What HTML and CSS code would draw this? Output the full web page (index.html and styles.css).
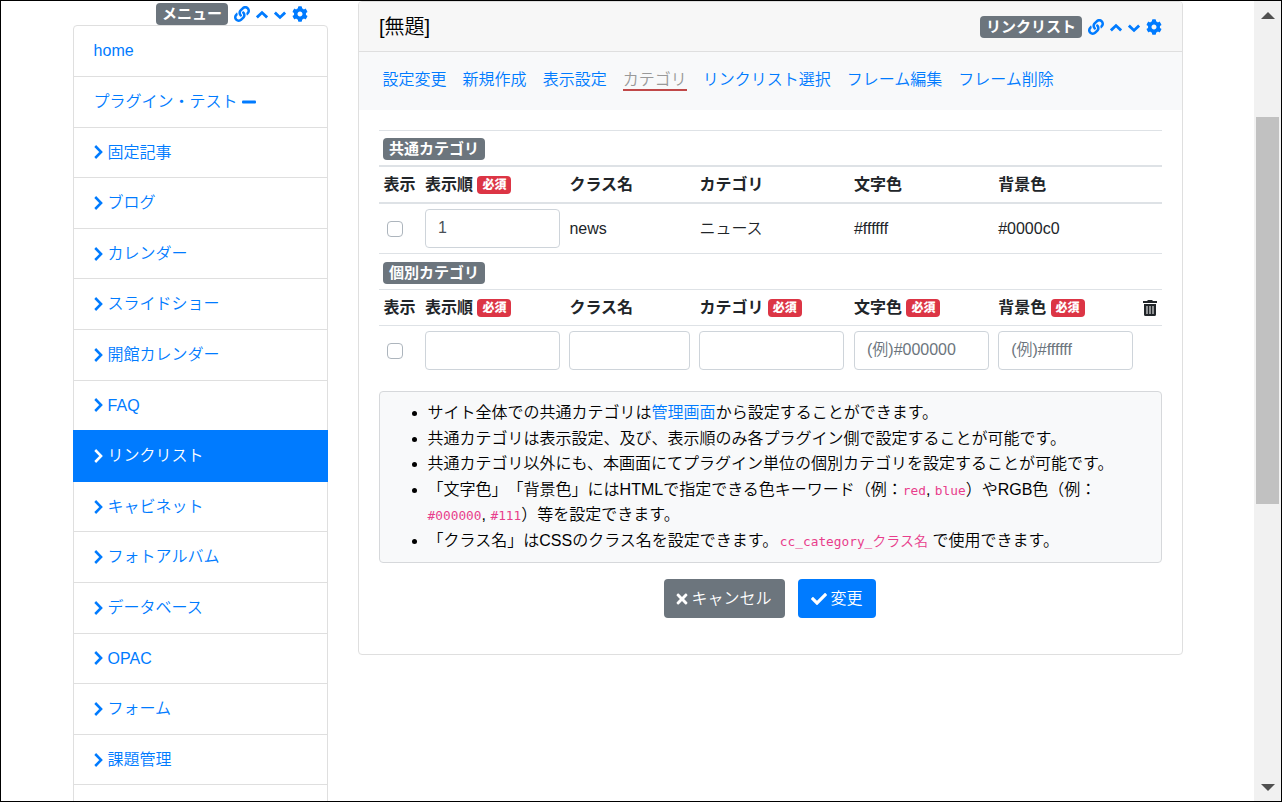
FILE: index.html
```html
<!DOCTYPE html>
<html lang="ja">
<head>
<meta charset="utf-8">
<title>リンクリスト</title>
<link rel="stylesheet" href="styles.css">
</head>
<body>
<svg class="defs">
  <symbol id="link" viewBox="0 0 512 512"><path d="M326.612 185.391c59.747 59.809 58.927 155.698.36 214.59-.11.12-.24.25-.36.37l-67.2 67.2c-59.27 59.27-155.699 59.262-214.96 0-59.27-59.26-59.27-155.7 0-214.96l37.106-37.106c9.84-9.84 26.786-3.3 27.294 10.606.648 17.722 3.826 35.527 9.69 52.721 1.986 5.822.567 12.262-3.783 16.612l-13.087 13.087c-28.026 28.026-28.905 73.66-1.155 101.96 28.024 28.579 74.086 28.749 102.325.51l67.2-67.19c28.191-28.191 28.073-73.757 0-101.83-3.701-3.694-7.429-6.564-10.341-8.569a16.037 16.037 0 0 1-6.947-12.606c-.396-10.567 3.348-21.456 11.698-29.806l21.054-21.055c5.521-5.521 14.182-6.199 20.584-1.731a152.482 152.482 0 0 1 20.522 17.197zM467.547 44.449c-59.261-59.262-155.69-59.27-214.96 0l-67.2 67.2c-.12.12-.25.25-.36.37-58.566 58.892-59.387 154.781.36 214.59a152.454 152.454 0 0 0 20.521 17.196c6.402 4.468 15.064 3.789 20.584-1.731l21.054-21.055c8.35-8.35 12.094-19.239 11.698-29.806a16.037 16.037 0 0 0-6.947-12.606c-2.912-2.005-6.64-4.875-10.341-8.569-28.073-28.073-28.191-73.639 0-101.83l67.2-67.19c28.239-28.239 74.3-28.069 102.325.51 27.75 28.3 26.872 73.934-1.155 101.96l-13.087 13.087c-4.35 4.35-5.769 10.79-3.783 16.612 5.864 17.194 9.042 34.999 9.69 52.721.509 13.906 17.454 20.446 27.294 10.606l37.106-37.106c59.271-59.259 59.271-155.699.001-214.959z"/></symbol>
  <symbol id="up" viewBox="0 0 12 16"><path d="M.9 11.4 6 6.6 11.100 11.400" fill="none" stroke="currentColor" stroke-width="2.8"/></symbol>
  <symbol id="down" viewBox="0 0 12 16"><path d="M.9 6.600 6 11.400 11.100 6.600" fill="none" stroke="currentColor" stroke-width="2.8"/></symbol>
  <symbol id="cog" viewBox="0 0 512 512"><path d="M487.4 315.7l-42.6-24.6c4.3-23.2 4.3-47 0-70.2l42.6-24.6c4.9-2.8 7.1-8.6 5.5-14-11.1-35.6-30-67.8-54.7-94.6-3.8-4.1-10-5.1-14.8-2.3L380.8 110c-17.9-15.4-38.5-27.3-60.8-35.1V25.8c0-5.6-3.9-10.5-9.4-11.7-36.7-8.2-74.3-7.8-109.2 0-5.5 1.2-9.4 6.1-9.4 11.7V75c-22.2 7.9-42.8 19.8-60.8 35.1L88.7 85.5c-4.9-2.8-11-1.9-14.8 2.3-24.7 26.7-43.6 58.9-54.7 94.6-1.7 5.4.6 11.2 5.5 14L67.3 221c-4.3 23.2-4.3 47 0 70.2l-42.6 24.6c-4.9 2.8-7.1 8.6-5.5 14 11.1 35.6 30 67.8 54.7 94.6 3.8 4.1 10 5.1 14.8 2.3l42.6-24.6c17.9 15.4 38.5 27.3 60.8 35.1v49.2c0 5.6 3.9 10.5 9.4 11.7 36.7 8.2 74.3 7.8 109.2 0 5.5-1.2 9.4-6.1 9.4-11.7v-49.2c22.2-7.9 42.8-19.8 60.8-35.1l42.6 24.6c4.9 2.8 11 1.9 14.8-2.3 24.7-26.7 43.6-58.9 54.7-94.6 1.5-5.5-.7-11.3-5.6-14.1zM256 336c-44.1 0-80-35.9-80-80s35.9-80 80-80 80 35.9 80 80-35.9 80-80 80z"/></symbol>
  <symbol id="right" viewBox="0 0 10 16"><path d="M1.2 2 7.100 8 1.200 14" fill="none" stroke="currentColor" stroke-width="2.5"/></symbol>
  <symbol id="minus" viewBox="0 0 14 16"><rect x="0" y="6.5" width="14" height="3" rx="1"/></symbol>
  <symbol id="times" viewBox="0 0 352 512"><path d="M242.72 256l100.07-100.07c12.28-12.28 12.28-32.19 0-44.48l-22.24-22.24c-12.28-12.28-32.19-12.28-44.48 0L176 189.28 75.93 89.21c-12.28-12.28-32.19-12.28-44.48 0L9.21 111.45c-12.28 12.28-12.28 32.19 0 44.48L109.28 256 9.21 356.07c-12.28 12.28-12.28 32.19 0 44.48l22.24 22.24c12.28 12.28 32.2 12.28 44.48 0L176 322.72l100.07 100.07c12.28 12.28 32.2 12.28 44.48 0l22.24-22.24c12.28-12.28 12.28-32.19 0-44.48L242.72 256z"/></symbol>
  <symbol id="check" viewBox="0 0 512 512"><path d="M173.898 439.404l-166.4-166.4c-9.997-9.997-9.997-26.206 0-36.204l36.203-36.204c9.997-9.998 26.207-9.998 36.204 0L192 312.69 432.095 72.596c9.997-9.997 26.207-9.997 36.204 0l36.203 36.204c9.997 9.997 9.997 26.206 0 36.204l-294.4 294.401c-9.998 9.997-26.207 9.997-36.204-.001z"/></symbol>
  <symbol id="trash" viewBox="0 0 14 16"><path fill-rule="evenodd" d="M0 1h4l1-1h4l1 1h4v2H0zM1 4h12v10.500q0 1.500-1.500 1.500h-9Q1 16 1 14.500zM3.500 6v8h1V6zM6.500 6v8h1V6zM9.500 6v8h1V6z"/></symbol>
</svg>
<div class="window">
  <div class="page">
    <aside class="sidebar">
      <div class="tools side-tools">
        <span class="badge">メニュー</span>
        <svg class="i16"><use href="#link"/></svg><svg class="i12"><use href="#up"/></svg><svg class="i12"><use href="#down"/></svg><svg class="i16"><use href="#cog"/></svg>
      </div>
      <nav class="menu">
        <a>home</a>
        <a>プラグイン・テスト<svg class="i14"><use href="#minus"/></svg></a>
        <a><svg class="i10"><use href="#right"/></svg>固定記事</a>
        <a><svg class="i10"><use href="#right"/></svg>ブログ</a>
        <a><svg class="i10"><use href="#right"/></svg>カレンダー</a>
        <a><svg class="i10"><use href="#right"/></svg>スライドショー</a>
        <a><svg class="i10"><use href="#right"/></svg>開館カレンダー</a>
        <a><svg class="i10"><use href="#right"/></svg>FAQ</a>
        <a class="active"><svg class="i10"><use href="#right"/></svg>リンクリスト</a>
        <a><svg class="i10"><use href="#right"/></svg>キャビネット</a>
        <a><svg class="i10"><use href="#right"/></svg>フォトアルバム</a>
        <a><svg class="i10"><use href="#right"/></svg>データベース</a>
        <a><svg class="i10"><use href="#right"/></svg>OPAC</a>
        <a><svg class="i10"><use href="#right"/></svg>フォーム</a>
        <a><svg class="i10"><use href="#right"/></svg>課題管理</a>
        <a></a>
      </nav>
    </aside>
    <main class="card">
      <header class="card-header">
        <h1>[無題]</h1>
        <div class="tools">
          <span class="badge">リンクリスト</span>
          <svg class="i16"><use href="#link"/></svg><svg class="i12"><use href="#up"/></svg><svg class="i12"><use href="#down"/></svg><svg class="i16"><use href="#cog"/></svg>
        </div>
      </header>
      <nav class="tabs">
        <a>設定変更</a><a>新規作成</a><a>表示設定</a><a class="current">カテゴリ</a><a>リンクリスト選択</a><a>フレーム編集</a><a>フレーム削除</a>
      </nav>
      <div class="card-body">
        <div class="table">
          <div class="row title"><span class="badge">共通カテゴリ</span></div>
          <div class="row head thick">
            <div>表示</div><div>表示順 <b class="req">必須</b></div><div>クラス名</div><div>カテゴリ</div><div>文字色</div><div>背景色</div><div></div>
          </div>
          <div class="row data thick">
            <div><input type="checkbox" class="check"></div><div><input class="field" value="1"></div><div>news</div><div>ニュース</div><div>#ffffff</div><div>#0000c0</div><div></div>
          </div>
          <div class="row title"><span class="badge">個別カテゴリ</span></div>
          <div class="row head">
            <div>表示</div><div>表示順 <b class="req">必須</b></div><div>クラス名</div><div>カテゴリ <b class="req">必須</b></div><div>文字色 <b class="req">必須</b></div><div>背景色 <b class="req">必須</b></div><div><svg class="i14 trash"><use href="#trash"/></svg></div>
          </div>
          <div class="row data last">
            <div><input type="checkbox" class="check"></div><div><input class="field"></div><div><input class="field"></div><div><input class="field"></div><div><input class="field" placeholder="(例)#000000"></div><div><input class="field" placeholder="(例)#ffffff"></div><div></div>
          </div>
        </div>
        <ul class="notes">
          <li>サイト全体での共通カテゴリは<a>管理画面</a>から設定することができます。</li>
          <li>共通カテゴリは表示設定、及び、表示順のみ各プラグイン側で設定することが可能です。</li>
          <li>共通カテゴリ以外にも、本画面にてプラグイン単位の個別カテゴリを設定することが可能です。</li>
          <li>「文字色」「背景色」にはHTMLで指定できる色キーワード（例：<code>red</code>, <code>blue</code>）やRGB色（例：<br><code>#000000</code>, <code>#111</code>）等を設定できます。</li>
          <li>「クラス名」はCSSのクラス名を設定できます。<code class="prefix">cc_category_<span class="wide">クラス名</span></code> で使用できます。</li>
        </ul>
        <div class="actions">
          <button class="btn cancel"><svg class="i12x"><use href="#times"/></svg>キャンセル</button>
          <button class="btn submit"><svg class="i16"><use href="#check"/></svg>変更</button>
        </div>
      </div>
    </main>
  </div>
  <div class="scrollbar"><i class="arrow-up"></i><div class="thumb"></div><i class="arrow-down"></i></div>
</div>
</body>
</html>
```
FILE: styles.css
```css
* { box-sizing: border-box; }
body {
  margin: 0;
  font: 350 16px/25.6px "Liberation Sans", "Noto Sans CJK JP", sans-serif;
  color: #212529;
  text-spacing-trim: space-all;
}
.defs { position: absolute; width: 0; height: 0; }
svg { fill: currentColor; height: 16px; flex: none; }
.i10 { width: 10px; }
.i12 { width: 12px; }
.i12x { width: 12px; }
.i14 { width: 14px; }
.i16 { width: 16px; }
a { color: #007bff; }
.window {
  width: 1282px;
  height: 802px;
  border: 1px solid #000;
  overflow: hidden;
  display: flex;
  justify-content: space-between;
  background: #fff;
}
.page { display: flex; gap: 30px; padding-left: 72px; align-items: flex-start; }
.sidebar { width: 255px; }
.tools { display: flex; align-items: center; color: #007bff; gap: 6px; }
.side-tools { height: 24.4px; padding: 2px 20px 0 0; justify-content: flex-end; }
.badge {
  display: block;
  height: 22px;
  padding: 0 6px;
  border-radius: 4px;
  background: #6c757d;
  color: #fff;
  font-size: 15px;
  font-weight: 700;
  line-height: 22px;
  white-space: nowrap;
}
.menu { border: 1px solid #dfdfdf; border-radius: 4px 4px 0 0; }
.menu a {
  display: flex;
  align-items: center;
  gap: 4px;
  height: 50.6px;
  padding: 0 19.6px;
  border-bottom: 1px solid #dfdfdf;
}
.menu .active {
  margin: -1px -1px -0.4px;
  height: 52px;
  padding: 0 20.6px;
  background: #007bff;
  border-color: #007bff;
  color: #fff;
}
.card {
  width: 825px;
  height: 654px;
  border: 1px solid #dfdfdf;
  border-radius: 4px;
  overflow: hidden;
}
.card-header {
  height: 50px;
  padding: 0 20px;
  display: flex;
  align-items: center;
  justify-content: space-between;
  background: #f7f7f7;
  border-bottom: 1px solid #dfdfdf;
}
.card-header .tools { padding-top: 1px; }
h1 { margin: 0; font-size: 20px; font-weight: 350; line-height: 24px; color: #000; }
.tabs {
  display: flex;
  gap: 16px;
  height: 58px;
  padding: 16px 23.6px;
  background: #f8f9fa;
}
.tabs a { height: 23px; line-height: 24px; white-space: nowrap; }
.tabs .current { color: #999; border-bottom: 2px solid #c04848; }
.card-body { padding: 20px 20px 0; }
.row {
  display: grid;
  grid-template-columns: 41.2px 144.4px 130px 154.6px 144.2px 144.4px 24.2px;
  align-items: center;
  border-top: 1px solid #dee2e6;
}
.row > div { padding: 0 4.8px; white-space: nowrap; }
.row > div:first-child { padding-left: 4.4px; }
.row.thick { border-top-width: 2px; }
.row.title { display: flex; height: 35px; padding: 2px 0 0 4px; }
.row.title ~ .title { height: 36px; }
.row.head { height: 36px; font-weight: 700; }
.row.head.thick { height: 37px; }
.row.data { height: 51px; }
.row.last > div { margin-top: -1px; }
.req {
  display: inline-block;
  height: 18px;
  padding: 0 5px;
  border-radius: 4px;
  background: #dc3545;
  color: #fff;
  font-size: 12px;
  line-height: 18px;
  vertical-align: 1px;
}
.field {
  display: block;
  width: 100%;
  height: 39.4px;
  padding: 0 12px;
  border: 1px solid #ced4da;
  border-radius: 4px;
  background: #fff;
  font: inherit;
  color: #495057;
}
.field::placeholder { color: #6c757d; opacity: 1; }
.check {
  appearance: none;
  display: block;
  width: 16px;
  height: 16px;
  margin: 0 0 0 3.4px;
  border: 1px solid #adb5bd;
  border-radius: 4px;
  background: #fff;
}
.trash { display: block; }
.notes {
  margin: 15px 0 16px;
  padding: 8px 8px 8px 47.6px;
  height: 172px;
  border: 1px solid #d6d8db;
  border-radius: 4px;
  background: #f8f9fa;
  color: #000;
  white-space: nowrap;
}
code { font: 12.8px "DejaVu Sans Mono", monospace; color: #e83e8c; }
.prefix { margin-left: 1.6px; }
.wide { font: 350 14px "Noto Sans CJK JP", sans-serif; line-height: 1; }
.actions { display: flex; justify-content: center; gap: 13px; padding-right: 2px; }
.btn {
  display: flex;
  align-items: center;
  gap: 4px;
  height: 39px;
  padding: 0 12px;
  border: 0;
  border-radius: 4px;
  color: #fff;
  font: inherit;
}
.cancel { background: #6c757d; width: 121px; }
.submit { background: #007bff; width: 78px; padding: 0 13px; }
.scrollbar {
  width: 27px;
  padding: 11px 0 10px;
  display: flex;
  flex-direction: column;
  align-items: center;
  background: #f1f1f1;
}
.arrow-up, .arrow-down { border: 7px solid transparent; width: 0; height: 0; }
.arrow-up { border-top: 0; border-bottom-color: #505050; }
.arrow-down { border-bottom: 0; border-top-color: #505050; margin-top: auto; }
.thumb { width: 23px; height: 387px; margin-top: 98px; background: #c1c1c1; }
```
